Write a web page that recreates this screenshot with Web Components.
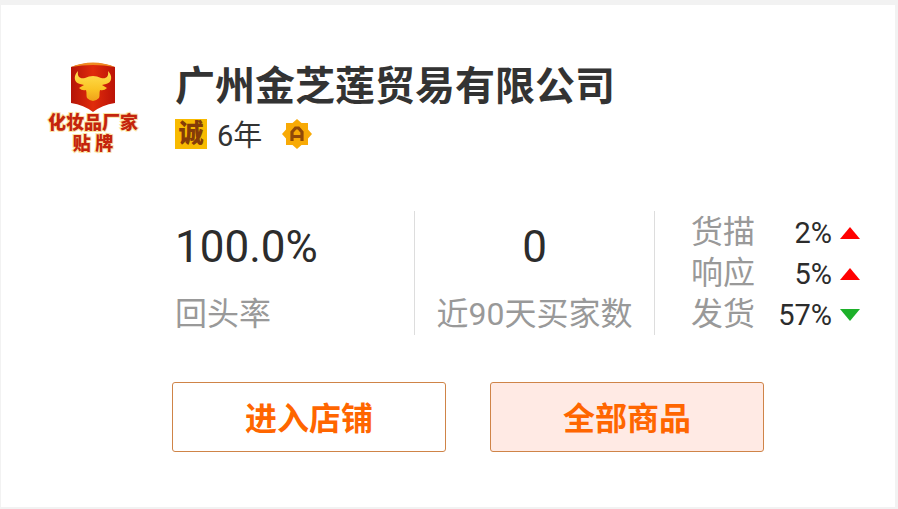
<!DOCTYPE html>
<html lang="zh-CN">
<head>
<meta charset="utf-8">
<title>广州金芝莲贸易有限公司</title>
<style>
html, body { height: 100%; }
body { margin: 0; background: #f2f2f2; font-family: Roboto, "Noto Sans CJK SC", sans-serif; color: #333; }
</style>
</head>
<body>
<shop-card></shop-card>
<script>
function define(name, html) {
  const template = document.createElement('template');
  template.innerHTML = html;
  customElements.define(name, class extends HTMLElement {
    constructor() {
      super();
      this.attachShadow({ mode: 'open' }).append(template.content.cloneNode(true));
    }
  });
}

define('shop-logo', `
<style>
:host { display: flex; flex-direction: column; align-items: center; white-space: nowrap; }
svg { display: block; width: 46px; height: 50px; }
span { font-size: 18px; line-height: 21px; font-weight: 900; color: #c4240c; -webkit-text-stroke: 2px #fbe3a4; paint-order: stroke fill; }
</style>
<svg viewBox="0 0 46 50" aria-hidden="true">
  <defs>
    <linearGradient id="r" x1="0" x2="1"><stop offset="0" stop-color="#b41408"/><stop offset=".5" stop-color="#e02b0b"/><stop offset="1" stop-color="#bb1307"/></linearGradient>
    <linearGradient id="g" x1="0" x2="0" y1="0" y2="1"><stop offset="0" stop-color="#ffe052"/><stop offset=".6" stop-color="#fac425"/><stop offset="1" stop-color="#f0a01a"/></linearGradient>
  </defs>
  <path d="M1 5Q23-3 45 5V41Q32 43 23 50Q14 43 1 41Z" fill="url(#r)"/>
  <path d="M1 5Q23-4 45 5Q23 1 1 5Z" fill="#f08a20"/>
  <path d="M8 9C3 14 4 21 10 22L14 23L9 26Q12 29 16 28C17 31 16 34 17 36Q23 42 29 36C30 34 29 31 30 28Q34 29 37 26L32 23L36 22C42 21 43 14 38 9C39 15 36 17 31 16Q27 14 23 14Q19 14 15 16C10 17 7 15 8 9Z" fill="url(#g)"/>
</svg>
<span>化妆品厂家</span><span>贴 牌</span>`);

define('trust-badge', `
<style>
:host { display: flex; align-items: center; justify-content: center; width: 32px; height: 30px; background: #f8ba00; color: #853c08; font-weight: 900; font-size: 25px; line-height: 30px; }
</style><slot></slot>`);

define('grade-badge', `
<style>:host, svg { display: block; width: 30px; height: 30px; }</style>
<svg viewBox="0 0 30 30" role="img" aria-label="A">
  <path d="M15 0L19.500 4H26V10.500L30 15L26 19.500V26H19.500L15 30L10.500 26H4V19.500L0 15L4 10.500V4H10.500Z" fill="#f8aa06"/>
  <path d="M10 22V13L13.500 9H16.500L20 13V22M10 17.500H20" fill="none" stroke="#914908" stroke-width="3.200"/>
</svg>`);

define('stat-cell', `
<style>
:host { display: flex; flex-direction: column; gap: 16px; height: 124px; box-sizing: border-box; padding-top: 9px; border-right: 1px solid #ddd; white-space: nowrap; }
:host([centered]) { align-items: center; }
.value { font-size: 44px; line-height: 54px; color: #2c2c2c; }
.label { font-size: 32px; line-height: 48px; color: #999; }
</style>
<div class="value"><slot name="value"></slot></div><div class="label"><slot></slot></div>`);

define('rate-row', `
<style>
:host { display: flex; align-items: center; height: 41px; white-space: nowrap; }
.label { flex: 1; color: #999; font-size: 32px; line-height: 41px; }
.value { font-size: 29px; line-height: 41px; color: #2c2c2c; padding-top: 2px; }
svg { width: 20px; height: 12px; margin-left: 8px; fill: #f00; }
:host([down]) svg { fill: #1db02a; transform: rotate(180deg); }
</style>
<span class="label"><slot></slot></span><span class="value"><slot name="value"></slot></span>
<svg viewBox="0 0 20 12" aria-hidden="true"><path d="M10 0L20 12H0Z"/></svg>`);

define('action-button', `
<style>
:host { display: block; flex: 1; }
button { display: block; width: 100%; height: 70px; padding: 4px 0 0; border: 1px solid #cf8448; border-radius: 3px; background: #fff; color: #ff6600; font: inherit; font-size: 32px; line-height: 48px; font-weight: 700; }
:host([tinted]) button { background: #ffeae4; }
</style>
<button type="button"><slot></slot></button>`);

define('shop-card', `
<style>
:host { display: flex; height: 100%; box-sizing: border-box; padding: 5px 3px 2px 1px; }
article { flex: 1; min-width: 0; display: grid; grid-template-columns: 92px 1fr; column-gap: 36px; align-content: start; background: #fff; padding: 57px 0 0 46px; }
h1 { margin: 0; font-size: 40px; line-height: 50px; font-weight: 700; white-space: nowrap; }
.badges { display: flex; align-items: center; margin-top: 6px; height: 32px; }
.years { font-size: 29px; line-height: 32px; margin: 0 20px 0 10px; padding-top: 4px; }
.stats { display: grid; grid-template-columns: repeat(3, 1fr); margin-top: 61px; }
.rates { padding: 1px 35px 0 36px; }
.actions { display: flex; gap: 44px; margin: 47px 131px 0 -3px; }
</style>
<article>
  <shop-logo></shop-logo>
  <div>
    <h1>广州金芝莲贸易有限公司</h1>
    <div class="badges"><trust-badge>诚</trust-badge><span class="years">6年</span><grade-badge></grade-badge></div>
    <div class="stats">
      <stat-cell><span slot="value">100.0%</span>回头率</stat-cell>
      <stat-cell centered><span slot="value">0</span>近90天买家数</stat-cell>
      <div class="rates">
        <rate-row><span slot="value">2%</span>货描</rate-row>
        <rate-row><span slot="value">5%</span>响应</rate-row>
        <rate-row down><span slot="value">57%</span>发货</rate-row>
      </div>
    </div>
    <div class="actions"><action-button>进入店铺</action-button><action-button tinted>全部商品</action-button></div>
  </div>
</article>`);
</script>
</body>
</html>
